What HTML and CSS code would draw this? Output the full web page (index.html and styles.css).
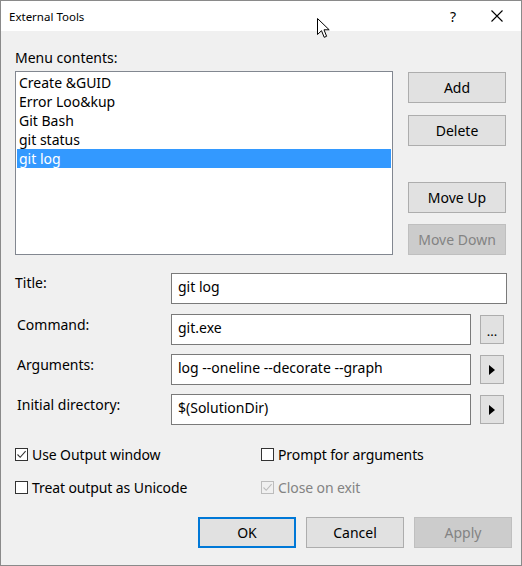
FILE: index.html
```html
<!DOCTYPE html>
<html>
<head>
<meta charset="utf-8">
<link rel="stylesheet" href="styles.css">
</head>
<body>
<div class="window">
  <div class="titlebar">
    <span class="title">External Tools</span>
    <span class="help">?</span>
    <span class="close"><svg width="12" height="12" viewBox="0 0 12 12"><path d="M0.5 0.5 L11.5 11.5 M11.5 0.5 L0.5 11.5" stroke="#000" stroke-width="1.1" fill="none"/></svg></span>
  </div>
  <div class="body">
    <div class="menu-label">Menu contents:</div>
    <div class="top-row">
      <div class="listbox">
        <div class="item">Create &amp;GUID</div>
        <div class="item">Error Loo&amp;kup</div>
        <div class="item">Git Bash</div>
        <div class="item">git status</div>
        <div class="item selected">git log</div>
      </div>
      <div class="side-buttons">
        <div class="btn">Add</div>
        <div class="btn btn-delete">Delete</div>
        <div class="btn btn-up">Move Up</div>
        <div class="btn btn-down disabled">Move Down</div>
      </div>
    </div>
    <div class="fields">
      <div class="field-row first">
        <div class="label label-title">Title:</div>
        <div class="input wide">git log</div>
      </div>
      <div class="field-row">
        <div class="label">Command:</div>
        <div class="input">git.exe</div>
        <div class="small-btn dots">...</div>
      </div>
      <div class="field-row">
        <div class="label">Arguments:</div>
        <div class="input">log --oneline --decorate --graph</div>
        <div class="small-btn"><svg width="6" height="10" viewBox="0 0 6 10"><path d="M0 0 L6 5 L0 10 Z" fill="#000"/></svg></div>
      </div>
      <div class="field-row">
        <div class="label">Initial directory:</div>
        <div class="input">$(SolutionDir)</div>
        <div class="small-btn"><svg width="6" height="10" viewBox="0 0 6 10"><path d="M0 0 L6 5 L0 10 Z" fill="#000"/></svg></div>
      </div>
    </div>
    <div class="checks">
      <div class="check"><span class="box"><svg width="11" height="11" viewBox="0 0 11 11"><path d="M1.5 5.5 L4.2 8.3 L9.6 2.2" stroke="#333" stroke-width="1.1" fill="none"/></svg></span><span>Use Output window</span></div>
      <div class="check"><span class="box"></span><span>Prompt for arguments</span></div>
      <div class="check"><span class="box"></span><span>Treat output as Unicode</span></div>
      <div class="check disabled"><span class="box"><svg width="11" height="11" viewBox="0 0 11 11"><path d="M1.5 5.5 L4.2 8.3 L9.6 2.2" stroke="#bcbcbc" stroke-width="1.1" fill="none"/></svg></span><span>Close on exit</span></div>
    </div>
    <div class="footer">
      <div class="btn btn-ok">OK</div>
      <div class="btn">Cancel</div>
      <div class="btn disabled">Apply</div>
    </div>
  </div>
  <svg class="cursor" width="13" height="21" viewBox="0 0 13 21"><path d="M0.5 0.5 L0.5 16.5 L4.5 12.7 L7.2 19.3 L9.6 18.3 L7 11.8 L12.2 11.8 Z" fill="#fff" stroke="#000" stroke-width="1" stroke-linejoin="miter"/></svg>
</div>
</body>
</html>
```

FILE: styles.css
```css
* { box-sizing: border-box; }
html, body { margin: 0; padding: 0; background: #f0f0f0; }
body { font-family: "Noto Sans", "Open Sans", sans-serif; font-size: 14px; color: #000; }

.window {
  position: relative;
  width: 522px;
  height: 566px;
  border: 1px solid #8a8a8a;
  background: #f0f0f0;
  overflow: hidden;
}

.titlebar {
  height: 30px;
  background: #fff;
  display: flex;
  align-items: center;
  padding-left: 8px;
  font-size: 11.5px;
}
.title { flex: 1; }
.help { width: 16px; text-align: center; font-size: 14px; margin-right: 30px; }
.close { width: 12px; height: 12px; margin-right: 18px; display: flex; }

.body { padding: 17px 0 0 14px; }

.menu-label { line-height: 19px; margin-bottom: 4px; }

.top-row { display: flex; }
.listbox {
  width: 378px;
  height: 184px;
  background: #fff;
  border: 1px solid #828790;
  padding: 1px;
}
.item { height: 19px; line-height: 19px; padding-left: 2px; }
.item.selected { background: #3399ff; color: #fff; }

.side-buttons {
  margin-left: 15px;
  padding-top: 1px;
  display: flex;
  flex-direction: column;
}
.btn {
  width: 98px;
  height: 31px;
  background: #e1e1e1;
  border: 1px solid #adadad;
  display: flex;
  align-items: center;
  justify-content: center;
}
.btn.disabled { background: #cccccc; border-color: #bfbfbf; color: #838383; }
.btn-delete { margin-top: 12px; }
.btn-up { margin-top: 36px; }
.btn-down { margin-top: 11px; }

.fields { margin-top: 18px; display: flex; flex-direction: column; gap: 9px; }
.field-row { display: flex; align-items: flex-start; height: 31px; }
.field-row.first { margin-bottom: 1px; }
.label { width: 156px; padding-left: 2px; line-height: 19px; padding-top: 1px; }
.label.label-title { padding-left: 0; padding-top: 0; }
.input {
  width: 300px;
  height: 31px;
  background: #fff;
  border: 1px solid #7a7a7a;
  padding-left: 6px;
  line-height: 26px;
  white-space: nowrap;
}
.input.wide { width: 336px; }
.small-btn {
  width: 24px;
  height: 29px;
  margin-top: 1px;
  margin-left: 9px;
  background: #e1e1e1;
  border: 1px solid #adadad;
  display: flex;
  align-items: center;
  justify-content: center;
}
.small-btn.dots { align-items: flex-end; padding-bottom: 7px; font-size: 13px; line-height: 10px; }

.checks {
  margin-top: 20px;
  display: grid;
  grid-template-columns: 246px 1fr;
  row-gap: 14px;
}
.check { display: flex; align-items: center; height: 19px; letter-spacing: -0.1px; }
.box {
  width: 13px;
  height: 13px;
  border: 1px solid #333;
  background: #fff;
  margin-right: 4px;
  display: flex;
  align-items: center;
  justify-content: center;
}
.check.disabled { color: #838383; }
.check.disabled .box { border-color: #bcbcbc; background: #f0f0f0; }

.footer {
  margin-top: 20px;
  display: flex;
  justify-content: flex-end;
  gap: 10px;
  padding-right: 9px;
}
.btn-ok { border: 2px solid #0078d7; }

.cursor { position: absolute; left: 316px; top: 17px; }
```
